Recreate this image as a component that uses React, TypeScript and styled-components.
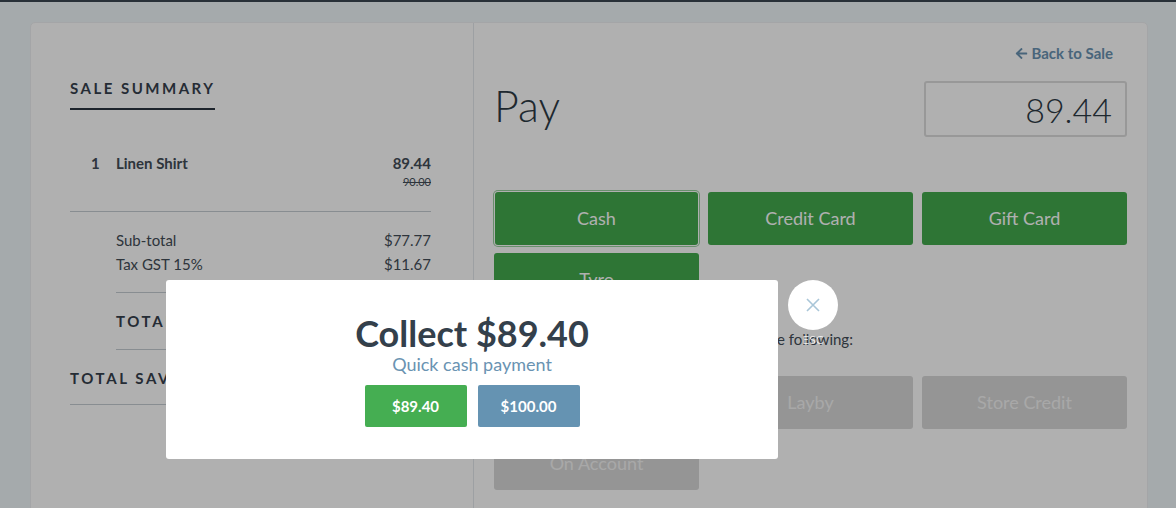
import * as React from "react";
import styled, { createGlobalStyle } from "styled-components";
import { FaArrowLeft } from "react-icons/fa";

const GlobalStyle = createGlobalStyle`
  html, body {
    margin: 0;
    padding: 0;
    background: #f0f6f9;
    font-family: Lato, "Open Sans", sans-serif;
    color: #3b4650;
    overflow: hidden;
  }
  * { box-sizing: border-box; }
`;

const Screen = styled.div`
  height: 508px;
  overflow: hidden;
`;

const TopBar = styled.div`
  height: 2px;
  background: #3a4651;
`;

const Page = styled.div`
  padding: 20px 28px 0 30px;
`;

const Card = styled.div`
  display: grid;
  grid-template-columns: 443px 1fr;
  background: #fff;
  border: 1px solid #eef0f2;
  border-radius: 5px;
  height: 560px;
`;

const Summary = styled.div`
  border-right: 1px solid #e4e8ec;
  padding: 55px 42px 0 39px;
`;

const SummaryTitle = styled.h2`
  display: inline-block;
  margin: 0;
  font-size: 15px;
  line-height: 20px;
  font-weight: 700;
  letter-spacing: 2.5px;
  color: #36414d;
  padding-bottom: 10px;
  border-bottom: 2px solid #2a3540;
`;

const ItemRow = styled.div`
  display: flex;
  align-items: flex-start;
  margin-top: 43px;
  padding-bottom: 22px;
  border-bottom: 1px solid #c6cdd3;
  font-weight: 700;
  font-size: 15px;
  line-height: 20px;
  color: #434d57;
`;

const Qty = styled.span`
  width: 46px;
  padding-left: 21px;
`;

const ItemName = styled.span`
  flex: 1;
`;

const ItemPrice = styled.div`
  display: flex;
  flex-direction: column;
  align-items: flex-end;
`;

const OldPrice = styled.s`
  font-weight: 400;
  font-size: 11px;
  line-height: 14px;
  margin-top: 2px;
`;

const Totals = styled.div<{ $indent?: boolean; $last?: boolean }>`
  margin-left: ${(p) => (p.$indent ? "46px" : "0")};
  padding: 16px 0 ${(p) => (p.$last ? "14px" : "16px")};
  border-bottom: 1px solid #c6cdd3;
`;

const TotalLine = styled.div`
  display: flex;
  justify-content: space-between;
  font-size: 15px;
  line-height: 24px;
  color: #434d57;
`;

const TotalLabel = styled.span`
  font-weight: 700;
  letter-spacing: 2.6px;
  font-size: 15px;
  color: #36414d;
`;

const Payment = styled.div`
  padding: 20px 20px 0 20px;
`;

const BackRow = styled.div`
  display: flex;
  justify-content: flex-end;
  padding-right: 14px;
`;

const BackLink = styled.a`
  display: inline-flex;
  align-items: center;
  gap: 3px;
  font-weight: 700;
  font-size: 15px;
  line-height: 20px;
  color: #6a93b2;
  text-decoration: none;
  svg {
    width: 13px;
    height: 13px;
  }
`;

const PayRow = styled.div`
  display: flex;
  justify-content: space-between;
  align-items: center;
  margin-top: 18px;
`;

const PayTitle = styled.h1`
  margin: 0 0 6px 0;
  font-weight: 300;
  font-size: 43px;
  line-height: 50px;
  color: #2e3a45;
`;

const AmountBox = styled.div`
  width: 203px;
  height: 56px;
  border: 2px solid #dcdcdc;
  border-radius: 3px;
  display: flex;
  align-items: center;
  justify-content: flex-end;
  padding-right: 13px;
  font-weight: 300;
  font-size: 34px;
  color: #2e3a45;
`;

const MethodGrid = styled.div<{ $top: number }>`
  display: grid;
  grid-template-columns: repeat(3, 1fr);
  gap: 8px 9px;
  margin-top: ${(p) => p.$top}px;
`;

const MethodButton = styled.button<{ $disabled?: boolean; $focused?: boolean }>`
  height: 53px;
  border: none;
  border-radius: 3px;
  padding: 0 0 2px;
  font-family: Lato, sans-serif;
  font-size: 18px;
  color: ${(p) => (p.$disabled ? "#f4f4f4" : "#fff")};
  background: ${(p) => (p.$disabled ? "#d8d8d8" : "#43aa4e")};
  box-shadow: ${(p) =>
    p.$focused ? "0 0 0 1px #fff, 0 0 0 2px #98cf9f" : "none"};
  margin: ${(p) => (p.$focused ? "0 1px 0 1px" : "0")};
`;

const Note = styled.p`
  margin: 23px 0 0;
  font-size: 15px;
  line-height: 20px;
  color: #434d57;
`;

const Overlay = styled.div`
  position: fixed;
  inset: 0;
  background: rgba(0, 0, 0, 0.31);
`;

const Modal = styled.div`
  position: fixed;
  left: 166px;
  top: 280px;
  width: 612px;
  height: 179px;
  background: #fff;
  border-radius: 3px;
  display: flex;
  flex-direction: column;
  align-items: center;
  padding-top: 33px;
`;

const ModalTitle = styled.h3`
  margin: 0;
  font-size: 36px;
  line-height: 40px;
  font-weight: 700;
  color: #34404b;
`;

const ModalSub = styled.div`
  font-size: 18px;
  line-height: 22px;
  color: #6a93b2;
`;

const QuickRow = styled.div`
  display: flex;
  gap: 11px;
  margin-top: 10px;
`;

const QuickButton = styled.button<{ $tone: "green" | "blue" }>`
  width: 102px;
  height: 42px;
  border: none;
  border-radius: 2px;
  font-family: Lato, sans-serif;
  font-weight: 700;
  font-size: 15px;
  color: #fff;
  background: ${(p) => (p.$tone === "green" ? "#45ae52" : "#6593b2")};
`;

const CloseWrap = styled.div`
  position: fixed;
  left: 788px;
  top: 280px;
  width: 50px;
  display: flex;
  flex-direction: column;
  align-items: center;
`;

const CloseCircle = styled.div`
  width: 50px;
  height: 50px;
  border-radius: 50%;
  background: #fff;
  display: flex;
  align-items: center;
  justify-content: center;
`;

const EscLabel = styled.span`
  margin-top: 3px;
  font-size: 12px;
  line-height: 14px;
  color: rgba(255, 255, 255, 0.75);
`;

export default function App() {
  return (
    <Screen>
      <GlobalStyle />
      <TopBar />
      <Page>
        <Card>
          <Summary>
            <SummaryTitle>SALE SUMMARY</SummaryTitle>
            <ItemRow>
              <Qty>1</Qty>
              <ItemName>Linen Shirt</ItemName>
              <ItemPrice>
                <span>89.44</span>
                <OldPrice>90.00</OldPrice>
              </ItemPrice>
            </ItemRow>
            <Totals $indent>
              <TotalLine>
                <span>Sub-total</span>
                <span>$77.77</span>
              </TotalLine>
              <TotalLine>
                <span>Tax GST 15%</span>
                <span>$11.67</span>
              </TotalLine>
            </Totals>
            <Totals $indent>
              <TotalLine>
                <TotalLabel>TOTAL</TotalLabel>
                <TotalLabel>$89.44</TotalLabel>
              </TotalLine>
            </Totals>
            <Totals $last>
              <TotalLine>
                <TotalLabel>TOTAL SAVINGS</TotalLabel>
                <TotalLabel>$0.56</TotalLabel>
              </TotalLine>
            </Totals>
          </Summary>
          <Payment>
            <BackRow>
              <BackLink href="#">
                <FaArrowLeft />
                Back to Sale
              </BackLink>
            </BackRow>
            <PayRow>
              <PayTitle>Pay</PayTitle>
              <AmountBox>89.44</AmountBox>
            </PayRow>
            <MethodGrid $top={55}>
              <MethodButton $focused>Cash</MethodButton>
              <MethodButton>Credit Card</MethodButton>
              <MethodButton>Gift Card</MethodButton>
              <MethodButton>Tyro</MethodButton>
            </MethodGrid>
            <Note>Unavailable for this sale, so please check the following:</Note>
            <MethodGrid $top={27}>
              <MethodButton $disabled>Loyalty</MethodButton>
              <MethodButton $disabled>Layby</MethodButton>
              <MethodButton $disabled>Store Credit</MethodButton>
              <MethodButton $disabled>On Account</MethodButton>
            </MethodGrid>
          </Payment>
        </Card>
      </Page>
      <Overlay />
      <Modal>
        <ModalTitle>Collect $89.40</ModalTitle>
        <ModalSub>Quick cash payment</ModalSub>
        <QuickRow>
          <QuickButton $tone="green">$89.40</QuickButton>
          <QuickButton $tone="blue">$100.00</QuickButton>
        </QuickRow>
      </Modal>
      <CloseWrap>
        <CloseCircle>
          <svg width="16" height="16" viewBox="0 0 16 16">
            <path d="M2 2 L14 14 M14 2 L2 14" stroke="#a9c6d8" strokeWidth="1.6" fill="none" />
          </svg>
        </CloseCircle>
        <EscLabel>ESC</EscLabel>
      </CloseWrap>
    </Screen>
  );
}
